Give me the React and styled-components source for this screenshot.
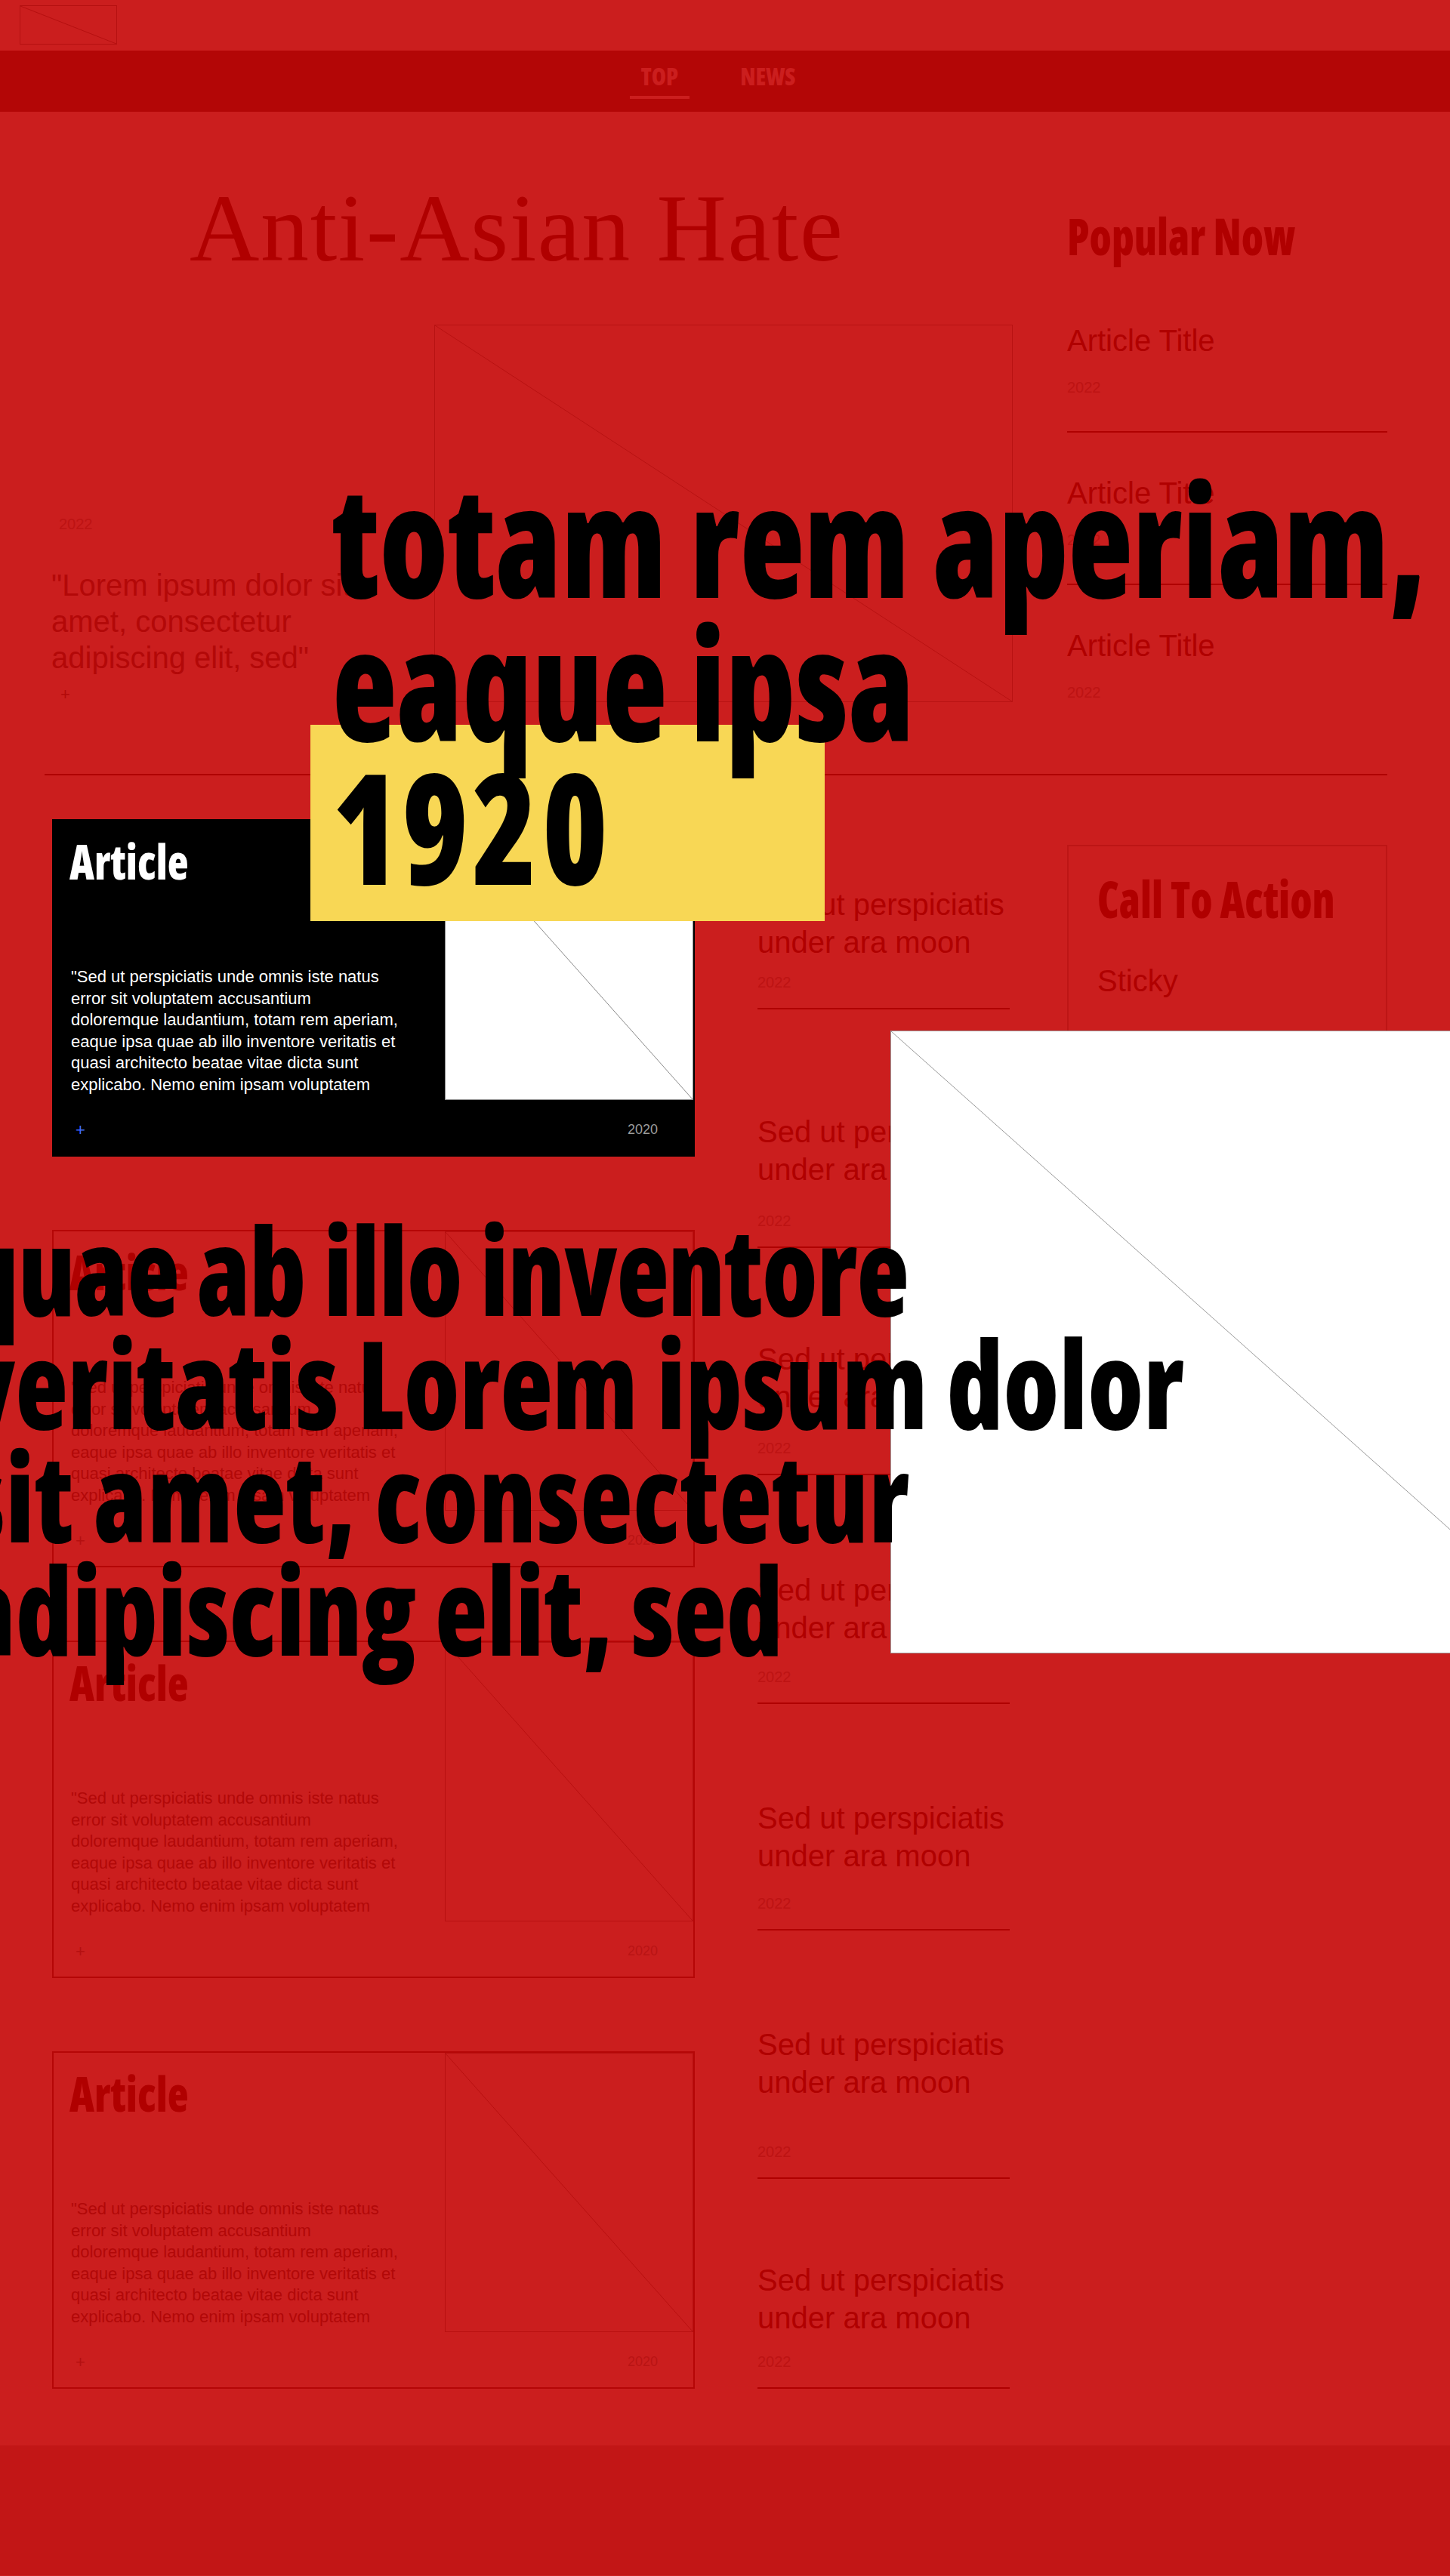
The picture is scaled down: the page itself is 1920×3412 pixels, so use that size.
import React from 'react'
import styled, { createGlobalStyle, css } from 'styled-components'

const RED = '#cb1e1e'
const DARK = '#b00000'
const FAINT = '#bd1313'

const GlobalStyle = createGlobalStyle`
  body {
    margin: 0;
    background: ${RED};
  }
  * { box-sizing: border-box; }
`

// heavy condensed face standing in for the poster font
const display = css`
  font-family: "Open Sans", "Liberation Sans", sans-serif;
  font-weight: 800;
  font-stretch: 75%;
  white-space: nowrap;
  transform-origin: left center;
  transform: scaleX(${p => p.sx || 0.85});
`

const Page = styled.div`
  position: relative;
  overflow: hidden;
  background: ${RED};
  font-family: "Liberation Sans", Arial, sans-serif;
`

const Header = styled.header`
  height: 67px;
  padding: 7px 26px;
`

const Placeholder = styled.div`
  width: ${p => p.w}px;
  height: ${p => p.h}px;
  border: 1px solid ${p => p.line || '#b81010'};
  background: ${p => p.bg || 'transparent'};
  flex-shrink: 0;
  svg { display: block; width: 100%; height: 100%; }
  line { stroke: ${p => p.line || '#b81010'}; stroke-width: 1; }
`

const Nav = styled.nav`
  height: 81px;
  background: #b30606;
  display: flex;
  justify-content: center;
  gap: 52px;
  padding: 19px 18px 0 0;
`

const NavItem = styled.a`
  font-family: "Open Sans", "Liberation Sans", sans-serif;
  font-weight: 800;
  font-stretch: 75%;
  font-size: 31px;
  line-height: 30px;
  height: 45px;
  padding: 0 15px 11px;
  color: ${RED};
  text-decoration: none;
  border-bottom: 4px solid ${p => (p.active ? RED : 'transparent')};
`

const Main = styled.main`
  margin-left: 59px;
  width: 1778px;
`

const HeroRow = styled.section`
  display: flex;
  align-items: flex-start;
`

const HeroMain = styled.div`
  width: 1282px;
  padding-top: 90px;
`

const HeroTitle = styled.h1`
  margin: 0 0 0 192px;
  font-family: "Liberation Serif", "Times New Roman", serif;
  font-weight: 400;
  font-size: 128px;
  line-height: 128px;
  letter-spacing: 1.6px;
  color: ${DARK};
`

const HeroBody = styled.div`
  display: flex;
  margin-top: 64px;
  padding-left: 9px;
`

const HeroText = styled.div`
  width: 460px;
  margin-right: 47px;
  padding-top: 253px;
  display: flex;
  flex-direction: column;
  align-items: flex-start;
`

const Year = styled.span`
  font-size: ${p => p.size || 20}px;
  line-height: ${p => (p.size || 20) + 3}px;
  color: ${p => p.color || FAINT};
  padding-left: ${p => p.indent || 0}px;
`

const Quote = styled.p`
  margin: 45px 0 0;
  font-size: 40px;
  line-height: 48px;
  color: #b30808;
`

const Plus = styled.span`
  font-size: 22px;
  line-height: 25px;
  color: ${p => p.color || '#b30a0a'};
  margin-top: ${p => p.mt || 0}px;
  margin-left: ${p => p.ml || 0}px;
`

const Sidebar = styled.aside`
  width: 424px;
  margin-left: 72px;
  padding-top: 131px;
`

const SectionHeading = styled.h2`
  ${display};
  margin: 0;
  font-size: 67px;
  line-height: 67px;
  color: ${DARK};
`

const PopularList = styled.ul`
  list-style: none;
  margin: 25px 0 0;
  padding: 0;
`

const PopularItem = styled.li`
  padding: 57px 0 46px;
  border-bottom: 2px solid ${DARK};
  display: flex;
  flex-direction: column;
  align-items: flex-start;
  &:last-child {
    border-bottom: none;
    padding-bottom: 0;
  }
`

const ItemTitle = styled.h3`
  margin: 0;
  font-size: 40px;
  line-height: ${p => p.lh || 46}px;
  font-weight: 400;
  color: ${DARK};
`

const ItemYear = styled(Year)`
  margin-top: ${p => p.gap}px;
`

const Rule = styled.hr`
  margin: 93px 0 0;
  border: 0;
  border-top: 2px solid ${DARK};
  height: 0;
`

const LowerRow = styled.section`
  display: flex;
  align-items: flex-start;
`

const Cards = styled.div`
  width: 851px;
  margin-left: 10px;
  padding-top: 58px;
  display: flex;
  flex-direction: column;
  gap: 97px;
`

const Card = styled.article`
  height: 447px;
  display: grid;
  grid-template-columns: 1fr 329px;
  grid-template-rows: 370px 1fr;
  background: ${p => (p.dark ? '#000' : 'transparent')};
  border: 2px solid ${p => (p.dark ? '#000' : '#b50606')};
`

const CardContent = styled.div`
  padding: 22px 0 0 21px;
`

const CardTitle = styled.h3`
  ${display};
  margin: 0;
  font-size: 63px;
  line-height: 63px;
  color: ${p => (p.dark ? '#fff' : DARK)};
`

const CardBody = styled.p`
  margin: 108px 0 0 2px;
  width: 437px;
  font-size: 22px;
  line-height: 28.6px;
  color: ${p => (p.dark ? '#fff' : '#b20808')};
`

const CardFooter = styled.div`
  grid-column: 1 / -1;
  display: flex;
  justify-content: space-between;
  align-items: center;
  padding: 6px 47px 0 29px;
`

const Stories = styled.ul`
  list-style: none;
  margin: 0 0 0 83px;
  padding: 0;
  width: 334px;
`

const Story = styled.li`
  padding: ${p => p.top}px 0 22px;
  border-bottom: 2px solid ${DARK};
  display: flex;
  flex-direction: column;
  align-items: flex-start;
`

const Cta = styled.div`
  width: 424px;
  height: 600px;
  margin: 92px 0 0 76px;
  padding: 36px 0 0 38px;
  border: 2px solid #bd1515;
`

const Sticky = styled.p`
  margin: 52px 0 0;
  font-size: 40px;
  line-height: 46px;
  color: ${DARK};
`

const Footer = styled.footer`
  margin-top: 75px;
  height: 172px;
  background: #c21616;
`

// floating poster layers
const YellowBlock = styled.div`
  position: absolute;
  left: 411px;
  top: 960px;
  width: 681px;
  height: 260px;
  background: #f8d755;
  z-index: 1;
`

const WhiteFrame = styled.div`
  position: absolute;
  left: 1179px;
  top: 1365px;
  z-index: 1;
`

const BigType = styled.div`
  ${display};
  position: absolute;
  left: ${p => p.x}px;
  top: ${p => p.y}px;
  z-index: 2;
  font-size: ${p => p.size}px;
  line-height: ${p => p.lh}px;
  color: #000;
  transform-origin: left top;
`

const BigLine = styled.span`
  display: block;
  letter-spacing: ${p => p.track || 0}px;
`

const Cross = () => (
  <svg viewBox="0 0 100 100" preserveAspectRatio="none">
    <line x1="0" y1="0" x2="100" y2="100" vectorEffect="non-scaling-stroke" />
  </svg>
)

const cardText =
  '"Sed ut perspiciatis unde omnis iste natus error sit voluptatem accusantium doloremque laudantium, totam rem aperiam, eaque ipsa quae ab illo inventore veritatis et quasi architecto beatae vitae dicta sunt explicabo. Nemo enim ipsam voluptatem'

const stories = [
  { top: 146, gap: 17 },
  { top: 137, gap: 32 },
  { top: 122, gap: 32 },
  { top: 127, gap: 29 },
  { top: 126, gap: 27 },
  { top: 126, gap: 56 },
  { top: 109, gap: 22 },
]

function ArticleCard({ dark }) {
  return (
    <Card dark={dark}>
      <CardContent>
        <CardTitle dark={dark} sx={0.91}>Article</CardTitle>
        <CardBody dark={dark}>{cardText}</CardBody>
      </CardContent>
      <Placeholder w={329} h={370} bg={dark ? '#fff' : 'transparent'} line={dark ? '#8a8a8a' : '#b81010'}>
        <Cross />
      </Placeholder>
      <CardFooter>
        <Plus color={dark ? '#3d6bff' : '#b51010'}>+</Plus>
        <Year size={18} color={dark ? '#9c9c9c' : '#b91414'}>2020</Year>
      </CardFooter>
    </Card>
  )
}

export default function App() {
  return (
    <Page>
      <GlobalStyle />
      <Header>
        <Placeholder w={129} h={52} line="#b51010">
          <Cross />
        </Placeholder>
      </Header>
      <Nav>
        <NavItem href="#" active>TOP</NavItem>
        <NavItem href="#">NEWS</NavItem>
      </Nav>

      <Main>
        <HeroRow>
          <HeroMain>
            <HeroTitle>Anti-Asian Hate</HeroTitle>
            <HeroBody>
              <HeroText>
                <Year indent={10}>2022</Year>
                <Quote>"Lorem ipsum dolor sit amet, consectetur adipiscing elit, sed"</Quote>
                <Plus mt={12} ml={12}>+</Plus>
              </HeroText>
              <Placeholder w={766} h={500} line="#b81212">
                <Cross />
              </Placeholder>
            </HeroBody>
          </HeroMain>

          <Sidebar>
            <SectionHeading sx={0.85}>Popular Now</SectionHeading>
            <PopularList>
              {[0, 1, 2].map(i => (
                <PopularItem key={i}>
                  <ItemTitle>Article Title</ItemTitle>
                  <ItemYear gap={28}>2022</ItemYear>
                </PopularItem>
              ))}
            </PopularList>
          </Sidebar>
        </HeroRow>

        <Rule />

        <LowerRow>
          <Cards>
            <ArticleCard dark />
            <ArticleCard />
            <ArticleCard />
            <ArticleCard />
          </Cards>

          <Stories>
            {stories.map((s, i) => (
              <Story key={i} top={s.top}>
                <ItemTitle lh={50}>Sed ut perspiciatis under ara moon</ItemTitle>
                <ItemYear gap={s.gap}>2022</ItemYear>
              </Story>
            ))}
          </Stories>

          <Cta>
            <SectionHeading sx={0.85}>Call To Action</SectionHeading>
            <Sticky>Sticky</Sticky>
          </Cta>
        </LowerRow>
      </Main>

      <Footer />

      <YellowBlock />
      <BigType x={440} y={618} size={204} lh={190} sx={0.865}>
        <BigLine>totam rem aperiam,</BigLine>
        <BigLine>eaque ipsa</BigLine>
        <BigLine track={6}>1920</BigLine>
      </BigType>

      <WhiteFrame>
        <Placeholder w={925} h={825} bg="#fff" line="#9a9a9a">
          <Cross />
        </Placeholder>
      </WhiteFrame>
      <BigType x={-50} y={1606} size={161} lh={150} sx={0.89}>
        <BigLine track={-1.2}>quae ab illo inventore</BigLine>
        <BigLine>veritatis Lorem ipsum dolor</BigLine>
        <BigLine track={0.9}>sit amet, consectetur</BigLine>
        <BigLine>adipiscing elit, sed</BigLine>
      </BigType>
    </Page>
  )
}
